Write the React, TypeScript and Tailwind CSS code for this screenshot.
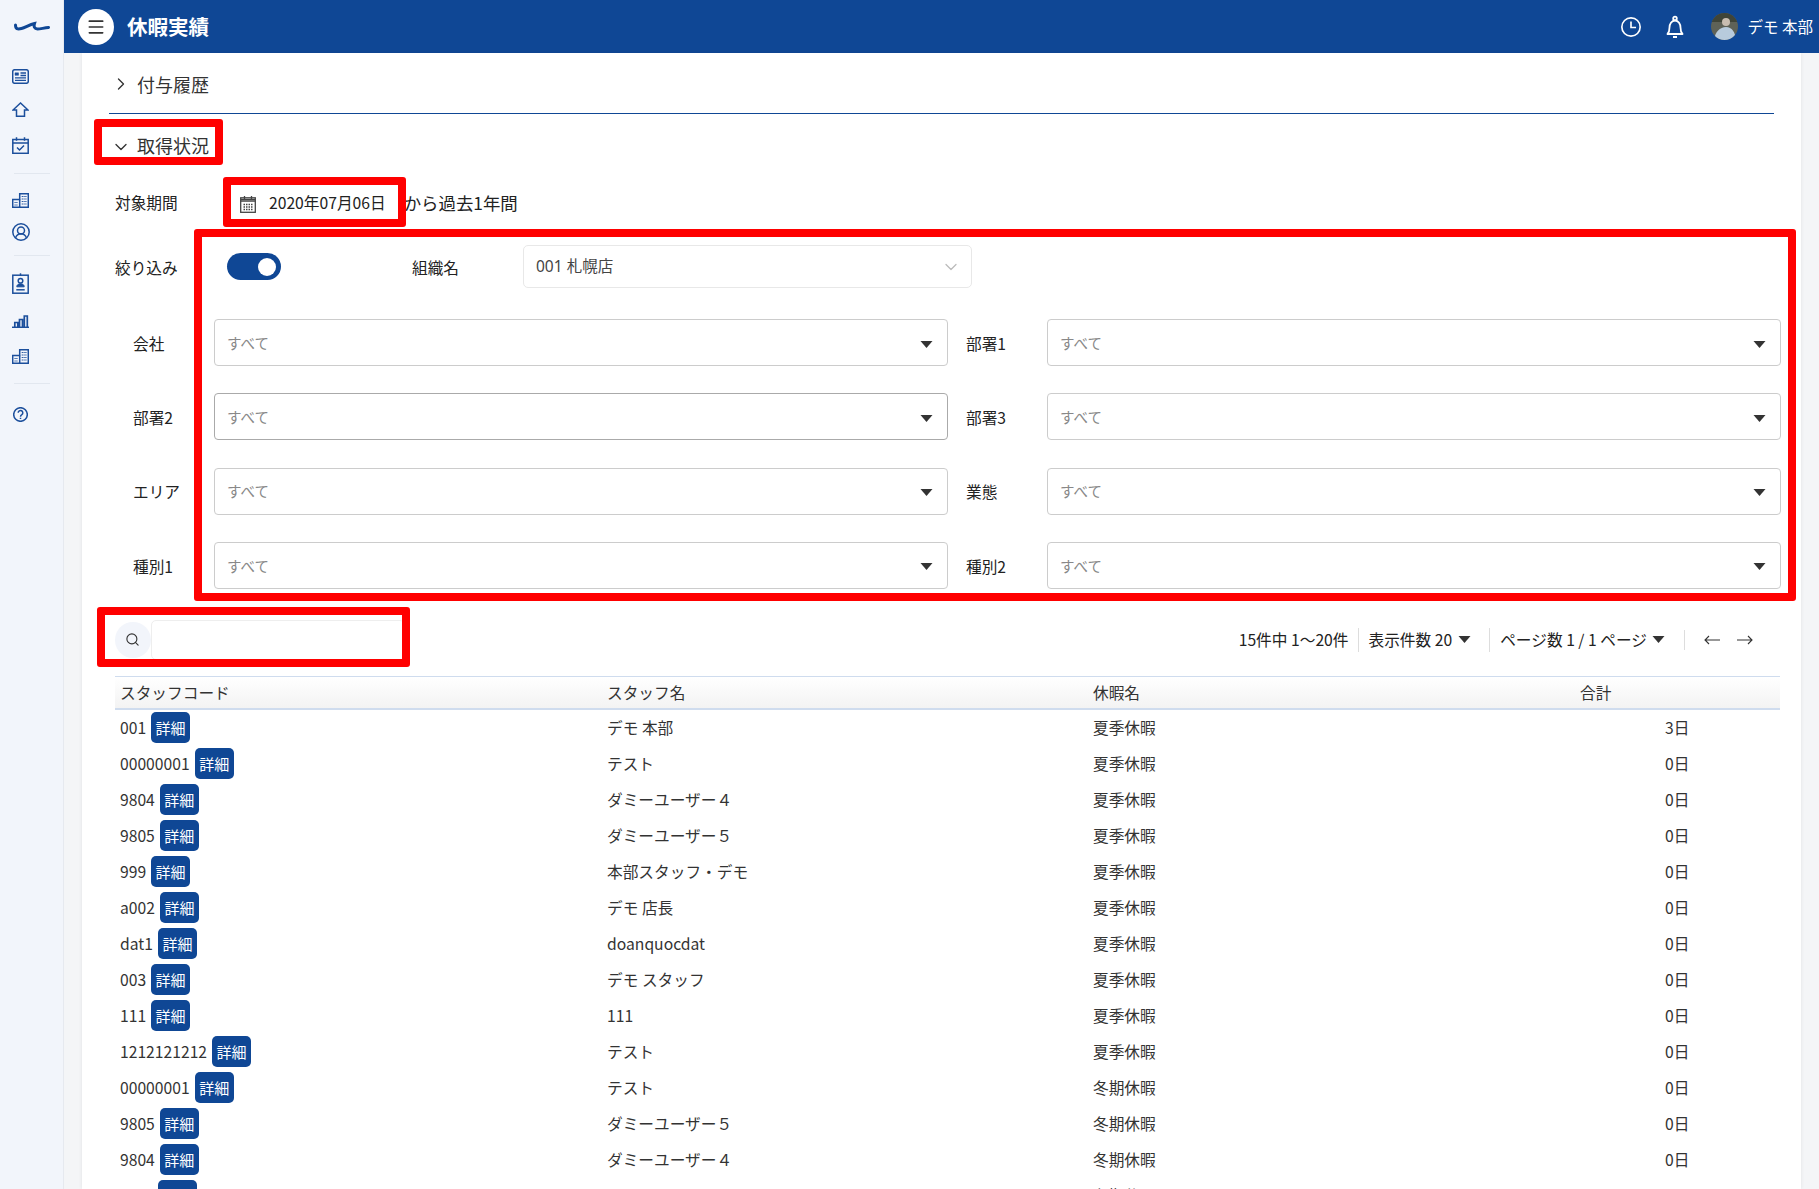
import { ChevronDown, ChevronRight, Menu, Search } from "lucide-react";
import type { ReactNode } from "react";

const rows = [
  ["001", "デモ 本部", "夏季休暇", "3日"],
  ["00000001", "テスト", "夏季休暇", "0日"],
  ["9804", "ダミーユーザー４", "夏季休暇", "0日"],
  ["9805", "ダミーユーザー５", "夏季休暇", "0日"],
  ["999", "本部スタッフ・デモ", "夏季休暇", "0日"],
  ["a002", "デモ 店長", "夏季休暇", "0日"],
  ["dat1", "doanquocdat", "夏季休暇", "0日"],
  ["003", "デモ スタッフ", "夏季休暇", "0日"],
  ["111", "111", "夏季休暇", "0日"],
  ["1212121212", "テスト", "夏季休暇", "0日"],
  ["00000001", "テスト", "冬期休暇", "0日"],
  ["9805", "ダミーユーザー５", "冬期休暇", "0日"],
  ["9804", "ダミーユーザー４", "冬期休暇", "0日"],
  ["dat1", "doanquocdat", "冬期休暇", "0日"],
];

const filters = [
  ["会社", "部署1"],
  ["部署2", "部署3"],
  ["エリア", "業態"],
  ["種別1", "種別2"],
];

function Icon({ w, h, className, children }: { w: number; h: number; className: string; children: ReactNode }) {
  return (
    <svg viewBox={`0 0 ${w} ${h}`} fill="none" stroke="#1c4f9c" strokeWidth="1.500" className={className}>
      {children}
    </svg>
  );
}

function Buildings({ className }: { className: string }) {
  return (
    <Icon w={17} h={15} className={className}>
      <path d="M.7 14.300V6.500h7V.7h8.600v13.600z" />
      <path d="M7.700 6.500v7.800" />
      <path d="M2.500 9.500h3.500M2.500 12h3.500M9.700 3.500h4.800M9.700 6h4.800M9.700 8.500h4.800M9.700 11h4.800" strokeWidth="1.200" strokeDasharray="1.200 .6" />
    </Icon>
  );
}

function Caret() {
  return (
    <svg viewBox="0 0 12 7" className="w-[13px] h-[7px] fill-[#333]">
      <path d="M0 0h12L6 7z" />
    </svg>
  );
}

function Divider({ className }: { className: string }) {
  return <div className={`h-px w-[36px] ml-[2px] bg-[#e2e7ef] ${className}`} />;
}

function FilterSelect({ label, strong }: { label: string; strong?: boolean }) {
  return (
    <div className="flex items-center pl-[18px]">
      <div className="w-[81px] pt-[2px] text-[15.700px] text-[#222]">{label}</div>
      <div
        className={
          strong
            ? "w-[734px] h-[47px] flex items-center justify-between pl-[12px] pr-[14px] bg-white rounded-[4px] border border-[#aaaaaa]"
            : "w-[734px] h-[47px] flex items-center justify-between pl-[12px] pr-[14px] bg-white rounded-[4px] border border-[#cccccc]"
        }
      >
        <span className="text-[14.500px] text-[#888]">すべて</span>
        <span className="pt-[3px]">
          <Caret />
        </span>
      </div>
    </div>
  );
}

function DetailRow({ row }: { row: string[] }) {
  return (
    <div className="grid grid-cols-[487px_486px_487px_1fr] h-[36px] items-center pl-[5px] text-[15.700px] text-[#333]">
      <div className="flex items-center gap-[5px]">
        <span>{row[0]}</span>
        <span className="w-[39px] h-[31px] flex items-center justify-center rounded-[5px] bg-[#0f4795] text-white text-[15px]">
          詳細
        </span>
      </div>
      <div>{row[1]}</div>
      <div>{row[2]}</div>
      <div className="pl-[85px]">{row[3]}</div>
    </div>
  );
}

export default function App() {
  return (
    <div className="relative flex h-screen overflow-hidden bg-white font-['Noto_Sans_CJK_JP','Noto_Sans',sans-serif]">
      {/* sidebar */}
      <div className="w-[64px] shrink-0 flex flex-col items-start pl-[12px] bg-[#f2f5fb] border-r border-[#e6e9ef]">
        <svg viewBox="0 0 36 12" className="w-[36px] h-[12px] mt-[20px] ml-[2px]" fill="none" stroke="#0f4795" strokeWidth="3" strokeLinecap="round">
          <path d="M1.500 5c0 4 2 4.500 6 3.500s8-4 13-5c-1 3 0 5.500 3 5.500s6-1 11-1.500" />
        </svg>
        <Icon w={17} h={15} className="w-[17px] h-[15px] mt-[37px]">
          <rect x=".7" y=".7" width="15.600" height="13.600" rx="2" />
          <path d="M3 3.800h3.500v2.500H3z" fill="#1c4f9c" strokeWidth=".5" />
          <path d="M8.500 4h5.500M8.500 6.500h5.500M3 8.800h11M3 11.300h11" strokeWidth="1.300" />
        </Icon>
        <Icon w={17} h={15} className="w-[17px] h-[15px] mt-[18px]">
          <path d="M8.500 1 1 8h3.500v6.300h8V8H16z" />
        </Icon>
        <Icon w={17} h={17} className="w-[17px] h-[17px] mt-[20px]">
          <rect x=".8" y="2.500" width="15.400" height="13.800" />
          <path d="M.8 6h15.400M4.500 .3v3.500M12.500 .3v3.500M5 10.500l2.500 2.500 4.500-4.500" />
        </Icon>
        <Divider className="mt-[19px]" />
        <Buildings className="w-[17px] h-[15px] mt-[19px]" />
        <Icon w={18} h={18} className="w-[18px] h-[18px] mt-[15px]">
          <circle cx="9" cy="9" r="8.200" />
          <circle cx="9" cy="7.500" r="3.500" />
          <path d="M3.500 15c1-3 3-4.200 5.500-4.200s4.500 1.200 5.500 4.200" />
        </Icon>
        <Divider className="mt-[14px]" />
        <Icon w={17} h={21} className="w-[17px] h-[21px] mt-[17px]">
          <rect x=".8" y="2.200" width="15.400" height="18" />
          <path d="M8.500 .3v2.500" />
          <circle cx="8.500" cy="7.800" r="2.300" />
          <path d="M4.800 13.800c0-2.200 1.800-3 3.700-3s3.700.8 3.700 3z" fill="#1c4f9c" strokeWidth="1" />
          <path d="M4.300 16.800h8.400" />
        </Icon>
        <Icon w={17} h={13} className="w-[17px] h-[13px] mt-[21px]">
          <path d="M0 12.300h17" />
          <path d="M2.800 12V7.500h3V12M7.500 12V4.500h3V12M12.300 12V1h3v11" strokeWidth="1.700" />
        </Icon>
        <Buildings className="w-[17px] h-[15px] mt-[21px]" />
        <Divider className="mt-[19px]" />
        <Icon w={15} h={15} className="w-[15px] h-[15px] mt-[23px] ml-[1px]">
          <circle cx="7.500" cy="7.500" r="6.800" />
          <path d="M5.200 5.800a2.300 2.300 0 1 1 3.600 1.900c-.8.5-1.300 1-1.300 2M7.500 10.800v1.200" />
        </Icon>
      </div>

      <div className="flex-1 min-w-0 flex flex-col">
        {/* header */}
        <div className="h-[53px] shrink-0 flex items-center bg-[#0f4795] text-white">
          <div className="ml-[14px] w-[36px] h-[36px] rounded-full bg-white flex items-center justify-center text-[#333]">
            <Menu size={20} strokeWidth={2} />
          </div>
          <div className="ml-[13px] text-[20.500px] font-bold">休暇実績</div>
          <div className="ml-auto flex items-center">
            <svg viewBox="0 0 24 24" className="w-[22px] h-[22px]" fill="none" stroke="currentColor" strokeWidth="1.800">
              <circle cx="12" cy="12" r="10" />
              <path d="M12 6v6.500h5.500" />
            </svg>
            <svg viewBox="0 0 24 24" className="ml-[21px] w-[24px] h-[24px]" fill="none" stroke="currentColor" strokeWidth="1.800" strokeLinejoin="round">
              <circle cx="12" cy="3.500" r="1.800" />
              <path d="M4.500 19h15c-1.500-1.500-2-3-2-6.500 0-3.500-2-7-5.500-7s-5.500 3.500-5.500 7c0 3.500-.5 5-2 6.500zM10 22h4" />
            </svg>
            <svg viewBox="0 0 27 27" className="ml-[24px] w-[27px] h-[27px] rounded-full">
              <rect width="27" height="27" fill="#5f6257" />
              <path d="M0 0h27v9H0z" fill="#3f4438" />
              <circle cx="15" cy="9" r="4" fill="#c9bdb0" />
              <path d="M3 27c1-8 6-13 12-13s9 5 10 13z" fill="#b8cbdc" />
            </svg>
            <div className="ml-[10px] mr-[6px] text-[15.500px]">デモ 本部</div>
          </div>
        </div>

        {/* body */}
        <div className="flex-1 min-h-0 bg-[#f4f5f7] px-[18px]">
          <div className="h-full bg-white shadow-[0_0_4px_rgba(0,0,0,0.08)]">
            <div className="mx-[27px] h-[61px] pt-[2px] flex items-center border-b border-[#0f4795] text-[18px] text-[#333]">
              <ChevronRight size={20} strokeWidth={1.600} className="ml-[2px]" />
              <span className="ml-[6px]">付与履歴</span>
            </div>
            <div className="mx-[27px] h-[64px] pb-[2px] flex items-center text-[18px] text-[#333]">
              <ChevronDown size={20} strokeWidth={1.600} className="ml-[2px] mt-[3px]" />
              <span className="ml-[6px]">取得状況</span>
            </div>

            <div className="ml-[33px] h-[50px] flex items-center text-[15.700px] text-[#222]">
              <div className="w-[125px]">対象期間</div>
              <svg viewBox="0 0 16 17" className="w-[16px] h-[17px] mt-[2px]" fill="none" stroke="#444" strokeWidth="1.300">
                <rect x=".7" y="1.800" width="14.600" height="14.500" />
                <path d="M.7 3.500h14.600M.7 5.200h14.600M4.500 0v3M11.500 0v3" />
                <path d="M3.500 8.500h9M3.500 11h9M3.500 13.500h9" strokeWidth="1.300" strokeDasharray="1.500 1" />
              </svg>
              <span className="ml-[13px]">2020年07月06日</span>
              <span className="ml-[18px] text-[17.400px]">から過去1年間</span>
            </div>

            <div className="ml-[33px] mt-[17px] h-[43px] flex items-center text-[15.700px] text-[#222]">
              <div className="w-[112px] pt-[3px]">絞り込み</div>
              <div className="w-[54px] h-[27px] rounded-full bg-[#0f4795] flex items-center justify-end pr-[5px]">
                <div className="w-[18px] h-[18px] rounded-full bg-white" />
              </div>
              <div className="ml-[131px] w-[111px] pt-[3px]">組織名</div>
              <div className="w-[449px] h-[43px] flex items-center justify-between pl-[12px] pr-[10px] rounded-[5px] border border-[#e8e8e8] font-['Noto_Sans','Noto_Sans_CJK_JP',sans-serif] text-[15.500px] text-[#444]">
                <span className="pt-[1px]">001 札幌店</span>
                <ChevronDown size={20} strokeWidth={1.500} className="text-[#bbb]" />
              </div>
            </div>

            <div className="ml-[33px] mt-[31px] grid grid-cols-[833px_833px] gap-y-[27.300px]">
              {filters.map((pair, i) =>
                pair.map((label, j) => <FilterSelect key={label} label={label} strong={i === 1 && j === 0} />)
              )}
            </div>

            {/* search and pager */}
            <div className="mt-[33px] ml-[33px] mr-[48px] h-[36px] flex items-center text-[15.700px] text-[#333]">
              <div className="w-[36px] h-[36px] rounded-full bg-[#f2f5fb] flex items-center justify-center">
                <Search size={15} strokeWidth={1.800} className="-ml-[1px]" />
              </div>
              <div className="w-[254px] h-[40px] rounded-[5px] border border-[#eeeeee]" />
              <div className="ml-auto flex items-center text-[#222]">
                <span className="pr-[9px] border-r border-[#dddddd]">15件中 1〜20件</span>
                <span className="pl-[10px]">表示件数 20</span>
                <span className="ml-[6px] mr-[18px]">
                  <Caret />
                </span>
                <span className="pl-[10px] border-l border-[#dddddd]">ページ数 1 / 1 ページ</span>
                <span className="ml-[5px] mr-[19px]">
                  <Caret />
                </span>
                <span className="pl-[19px] h-[20px] flex items-center border-l border-[#dddddd]">
                  <svg viewBox="0 0 16 10" className="w-[16px] h-[10px]" fill="none" stroke="#333" strokeWidth="1.100">
                    <path d="M16 5H1M5 1 1 5l4 4" />
                  </svg>
                </span>
                <svg viewBox="0 0 16 10" className="ml-[17px] w-[16px] h-[10px]" fill="none" stroke="#333" strokeWidth="1.100">
                  <path d="M0 5h15M11 1l4 4-4 4" />
                </svg>
              </div>
            </div>

            {/* table */}
            <div className="mt-[18px] ml-[33px] mr-[21px]">
              <div className="grid grid-cols-[487px_486px_487px_1fr] h-[34px] items-center pl-[5px] border-t border-b-2 border-t-[#cfdcee] border-b-[#cfdcee] bg-gradient-to-b from-white to-[#f3f3f3] text-[15.700px] text-[#333]">
                <div>スタッフコード</div>
                <div>スタッフ名</div>
                <div>休暇名</div>
                <div>合計</div>
              </div>
              {rows.map((row, i) => (
                <DetailRow key={i} row={row} />
              ))}
            </div>
          </div>
        </div>
      </div>

      {/* red annotation frames */}
      <div className="absolute left-[94px] top-[119px] w-[129px] h-[46px] border-[8px] border-[#ff0000] rounded-[3px]" />
      <div className="absolute left-[223px] top-[177px] w-[183px] h-[50px] border-[8px] border-[#ff0000] rounded-[3px]" />
      <div className="absolute left-[194px] top-[229px] w-[1602px] h-[372px] border-[8px] border-[#ff0000] rounded-[3px]" />
      <div className="absolute left-[97px] top-[607px] w-[313px] h-[60px] border-[8px] border-[#ff0000] rounded-[3px]" />
    </div>
  );
}
